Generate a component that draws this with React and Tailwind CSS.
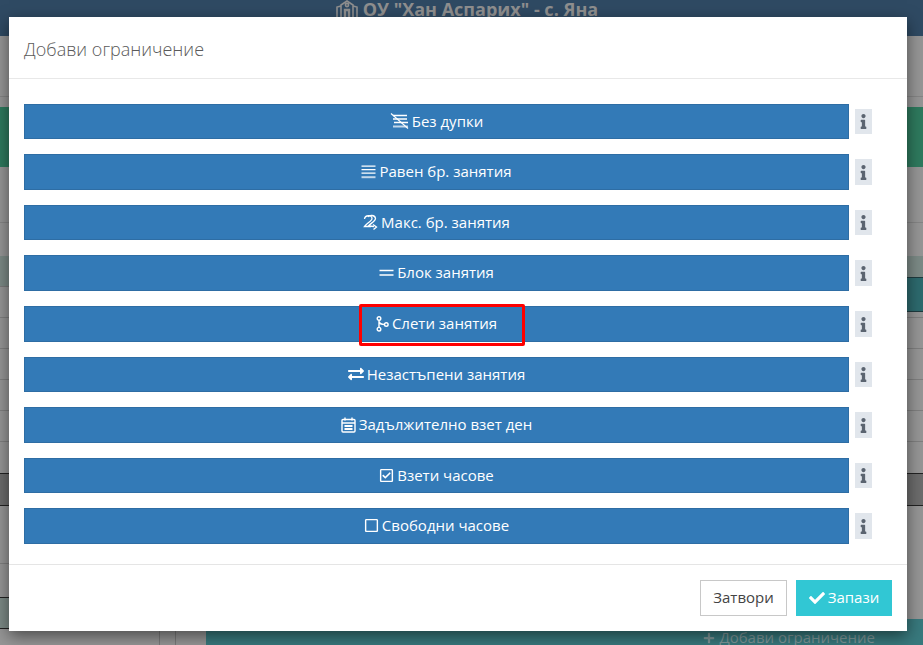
import React from "react";
import { FaCheck, FaInfo, FaPlus, FaExchangeAlt, FaRegCheckSquare, FaRegSquare } from "react-icons/fa";

const font = { fontFamily: '"Open Sans", "Liberation Sans", sans-serif' };

const IconGap = () => (
  <svg width="19" height="16" viewBox="0 0 19 16" fill="none" stroke="currentColor" strokeWidth="1.3">
    <path d="M3 2.5h14M3 6h14M4 9.5h14" />
    <path d="M3 13.5h15" strokeWidth="2" opacity="0.7" />
    <path d="M1 0.5l17 15" strokeWidth="1.1" />
  </svg>
);
const IconLines = () => (
  <svg width="15" height="14" viewBox="0 0 15 14" fill="none" stroke="currentColor" strokeWidth="1.2">
    <path d="M0.5 1.2h14M0.5 4.7h14M0.5 8.2h14" />
    <path d="M0.5 12.2h14" strokeWidth="2" opacity="0.7" />
  </svg>
);
const IconMax = () => (
  <svg width="15" height="16" viewBox="0 0 15 16" fill="none" stroke="currentColor" strokeWidth="1.3">
    <path d="M1.5 5C2 1 9 0.5 9 4.5C9 7 4 9 1.5 12.5H8" />
    <path d="M5 3C6 1 12 0.5 12.5 4.5C12.5 7 8 9 5.5 12L11 12.5" />
    <path d="M10 10.5l3.5 2.5-3 2.5" />
  </svg>
);
const IconBlock = () => (
  <svg width="15" height="8" viewBox="0 0 15 8" fill="none" stroke="currentColor" strokeWidth="1.6">
    <path d="M0.5 1.5h14M0.5 6h14" />
  </svg>
);
const IconMerge = () => (
  <svg width="13" height="16" viewBox="0 0 13 16" fill="none" stroke="currentColor" strokeWidth="1.4">
    <circle cx="3" cy="2.5" r="1.8" />
    <circle cx="3" cy="13.2" r="1.8" />
    <circle cx="10.3" cy="8.5" r="1.8" />
    <path d="M3 4.3v7.1M3 5.5c0.5 2.3 2.5 3 5.5 3" />
  </svg>
);
const IconCalendar = () => (
  <svg width="15" height="16" viewBox="0 0 15 16" fill="none" stroke="currentColor" strokeWidth="1.4">
    <rect x="1" y="2.5" width="13" height="12.5" rx="1" />
    <path d="M1 6h13M4 0.5v3M11 0.5v3" />
    <path d="M3.5 9h8M3.5 12h8" strokeWidth="2" />
  </svg>
);

const rows = [
  { label: "Без дупки", icon: <IconGap />, h: "h-[35px]", info: "h-[25px]", gap: "gap-[3px]" },
  { label: "Равен бр. занятия", icon: <IconLines />, h: "h-[36px]", info: "h-[26px]", gap: "gap-[3px]" },
  { label: "Макс. бр. занятия", icon: <IconMax />, h: "h-[35px]", info: "h-[25px]", gap: "gap-[3px]" },
  { label: "Блок занятия", icon: <IconBlock />, h: "h-[36px]", info: "h-[26px]", gap: "gap-[3px]" },
  { label: "Слети занятия", icon: <IconMerge />, h: "h-[36px]", info: "h-[26px]", gap: "gap-[3px]" },
  { label: "Незастъпени занятия", icon: <FaExchangeAlt size={16} />, h: "h-[35px]", info: "h-[25px]", gap: "gap-[3px]" },
  { label: "Задължително взет ден", icon: <IconCalendar />, h: "h-[36px]", info: "h-[26px]", gap: "gap-[3px]" },
  { label: "Взети часове", icon: <FaRegCheckSquare size={15} />, h: "h-[35px]", info: "h-[25px]", gap: "gap-[3px]" },
  { label: "Свободни часове", icon: <FaRegSquare size={15} />, h: "h-[36px]", info: "h-[26px]", gap: "gap-[3px]" },
];

export default function App() {
  return (
    <div className="relative h-[645px] w-[923px] overflow-hidden bg-[#969696]" style={font}>
      {/* page behind the dialog */}
      <div className="flex h-[36px] items-start justify-center bg-[#2f4a63] pl-[10px] text-[18px] font-bold leading-[18px] text-[#8f8f8f]">
        <svg width="24" height="20" viewBox="0 0 24 20" fill="none" stroke="currentColor" strokeWidth="1.6" className="mr-[4px]">
          <path d="M2 18V7l4-1M22 18V7l-4-1M6 18V5l6-4 6 4v13" />
          <circle cx="12" cy="5" r="1.6" />
          <path d="M10 18V10h4v8" strokeWidth="2.4" />
        </svg>
        <span>ОУ "Хан Аспарих" - с. Яна</span>
      </div>
      <div className="h-[61px] border-b border-[#858585]" />
      <div className="mt-[10px] h-[60px] bg-[#2e7a5e]" />
      <div className="h-[56px] border-b border-[#858585]" />
      <div className="h-[33px]" />
      <div className="relative h-[31px] border-b border-[#7a7a7a] bg-[#7c8a86]">
        <div className="absolute right-0 top-[21px] h-[35px] w-[16px] border-y border-[#1f3b3f] bg-[#2d6a6e]" />
      </div>
      <div className="h-[31px] border-b border-[#7f7f7f]" />
      <div className="h-[31px] border-b border-[#7f7f7f]" />
      <div className="h-[31px] border-b border-[#7f7f7f]" />
      <div className="h-[31px] border-b border-[#7f7f7f]" />
      <div className="h-[31px] border-b border-[#7f7f7f]" />
      <div className="h-[32px] border-b border-[#222]" />
      <div className="h-[32px] border-b border-[#222] bg-[#6c6c6c]" />
      <div className="flex h-[139px]">
        <div className="flex w-[206px] flex-col">
          <div className="h-[58px] border-b border-[#7f7f7f]" />
          <div className="h-[34px] border-b border-[#222]" />
          <div className="h-[31px] border-b border-[#222] bg-[#7c8a86]" />
          <div className="ml-[159px] h-[16px] w-[17px] border-x border-[#7a7a7a]" />
        </div>
        <div className="flex flex-1 flex-col">
          <div className="h-[113px] shrink-0" />
          <div className="flex h-[26px] shrink-0 items-end justify-end gap-[4px] bg-[#38797d] pr-[48px] text-[15px] font-normal leading-[15px] text-[#7f9799]">
            <FaPlus size={12} className="mb-[1px]" />
            <span>Добави ограничение</span>
          </div>
        </div>
      </div>

      {/* dialog */}
      <div className="absolute left-[9px] top-[17px] flex h-[614px] w-[898px] flex-col bg-white shadow-[0_5px_15px_rgba(0,0,0,0.5)]">
        <div className="flex h-[62px] items-center border-b border-[#e8e8e8] px-[15px] pt-[4px] text-[18px] font-light text-[#5a5a5a]">
          Добави ограничение
        </div>
        <div className="flex h-[485px] flex-col gap-[15px] pl-[15px] pr-[35px] pt-[25px]">
          {rows.map((r) => (
            <div key={r.label} className="flex items-center gap-[6px]">
              <div className={`flex flex-1 items-center justify-center ${r.gap} ${r.h} border border-[#2e6da4] bg-[#337ab7] pb-[1px] text-[15px] font-medium text-white`}>
                <span className="flex items-center">{r.icon}</span>
                <span>{r.label}</span>
              </div>
              <div className={`flex ${r.info} w-[17px] items-center justify-center bg-[#e1e6ec] text-[#5b6470]`}>
                <FaInfo size={15} />
              </div>
            </div>
          ))}
        </div>
        <div className="flex flex-1 items-start justify-end gap-[9px] border-t border-[#e5e5e5] px-[15px] pt-[15px]">
          <div className="flex h-[36px] w-[87px] items-center justify-center border border-[#c8c8c8] pb-[1px] text-[15px] text-[#444]">Затвори</div>
          <div className="flex h-[36px] w-[96px] items-center justify-center gap-[3px] bg-[#31c7d4] pb-[1px] text-[15px] font-medium text-white">
            <FaCheck size={16} />
            <span>Запази</span>
          </div>
        </div>
      </div>

      {/* highlight annotation */}
      <div className="absolute left-[359px] top-[304px] h-[42px] w-[166px] rounded-[2px] border-[3px] border-[#ff0000]" />
    </div>
  );
}
